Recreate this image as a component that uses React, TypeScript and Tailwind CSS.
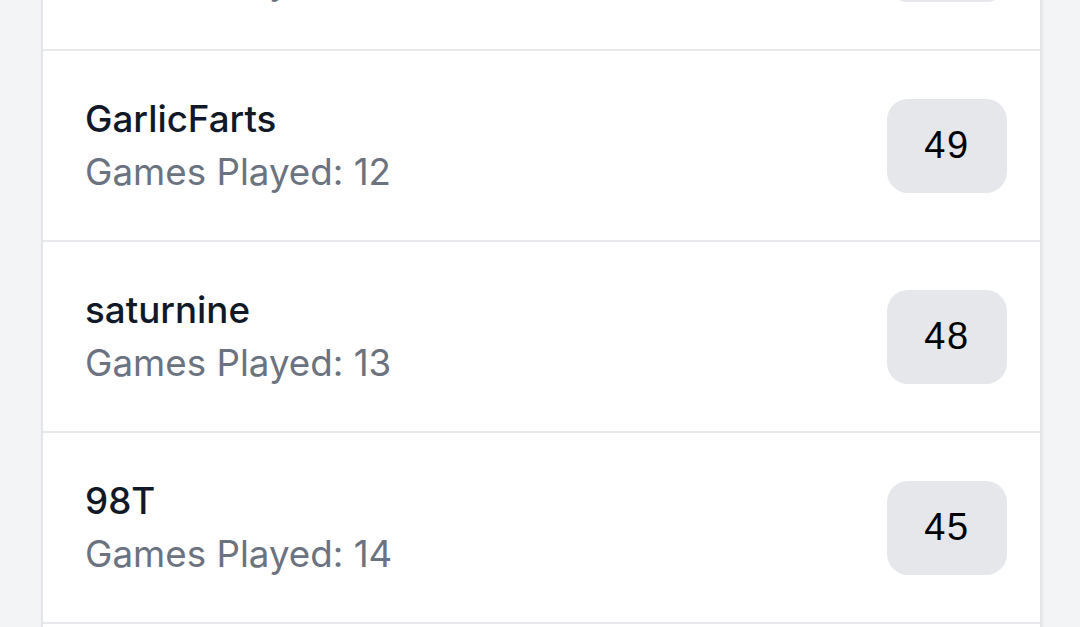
import React from "react";

const rows = [
  { name: "Pickleball", games: 11, score: 52 },
  { name: "GarlicFarts", games: 12, score: 49 },
  { name: "saturnine", games: 13, score: 48 },
  { name: "98T", games: 14, score: 45 },
  { name: "Zephyr", games: 10, score: 44 },
];

export default function App() {
  return (
    <div className="h-[627px] w-[1080px] overflow-hidden bg-[#f3f4f6]">
      <div className="-mt-[140px] ml-[41px] w-[1001px] border-x-2 border-[#e4e5e8] bg-white shadow-[1px_0_2px_rgba(0,0,0,0.06)]">
        {rows.map((r) => (
          <div
            key={r.name}
            className="flex h-[191px] items-center justify-between border-b-2 border-[#e8e9ec] pl-[42px] pr-[33px]"
          >
            <div className="font-['Inter',sans-serif] text-[36.75px] leading-[52.5px]">
              <div className="font-medium text-[#111827]">{r.name}</div>
              <div className="text-[#6b7280]">Games Played: {r.games}</div>
            </div>
            <div className="flex h-[94px] w-[120px] items-center justify-center rounded-[21px] bg-[#e5e7eb] font-['Liberation_Sans',Arial,sans-serif] text-[38px] tracking-[1.5px] text-black">
              {r.score}
            </div>
          </div>
        ))}
      </div>
    </div>
  );
}
